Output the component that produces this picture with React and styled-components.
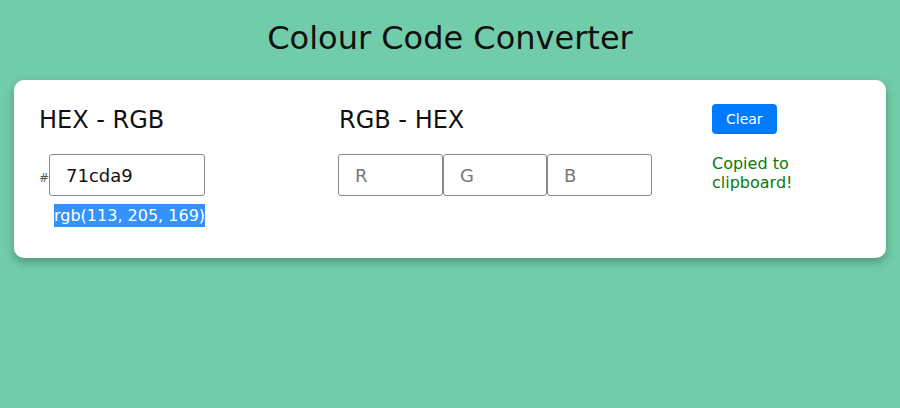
import React from "react";
import styled, { createGlobalStyle } from "styled-components";

const Global = createGlobalStyle`
  html, body { margin: 0; padding: 0; }
  body {
    background: #71cda9;
    font-family: "DejaVu Sans", "Liberation Sans", sans-serif;
    color: #111;
  }
  * { box-sizing: border-box; }
`;

const Page = styled.div`
  width: 900px;
  height: 408px;
  padding: 19px 14px 0;
`;

const Title = styled.h1`
  margin: 0 0 23px;
  font-size: 32px;
  line-height: 38px;
  font-weight: 400;
  text-align: center;
  color: #111;
`;

const Card = styled.div`
  background: #fff;
  border-radius: 10px;
  box-shadow: 0 4px 10px rgba(0, 0, 0, 0.28);
  padding: 24px 25px 31px;
  display: grid;
  grid-template-columns: 300px 373px 1fr;
  align-items: start;
`;

const Column = styled.div`
  display: flex;
  flex-direction: column;
  align-items: flex-start;
  gap: 20px;
`;

const Heading = styled.h2`
  margin: 2px 0 0;
  font-size: 24px;
  line-height: 28px;
  font-weight: 400;
  color: #111;
`;

const Field = styled.div`
  display: flex;
  flex-direction: column;
  align-items: flex-start;
  gap: 8px;
`;

const HexRow = styled.div`
  display: flex;
  align-items: baseline;
`;

const Hash = styled.span`
  font-size: 12px;
  color: #555;
`;

const Input = styled.input`
  width: ${(p) => p.$w}px;
  height: 42px;
  border: 1px solid #8a8a8a;
  border-radius: 3px;
  padding: 0 0 0 16px;
  font-family: "DejaVu Sans", "Liberation Sans", sans-serif;
  font-size: 18px;
  color: #111;
  background: #fff;
  outline: none;
  &::placeholder { color: #777; }
`;

const Result = styled.span`
  margin-left: 15px;
  display: inline-block;
  height: 23px;
  line-height: 23px;
  font-size: 16px;
  color: #fff;
  background: #3392fc;
`;

const RgbRow = styled.div`
  display: flex;
  margin-left: -1px;
`;

const ClearButton = styled.button`
  height: 30px;
  padding: 0 14px;
  border: none;
  border-radius: 4px;
  background: #007bff;
  color: #fff;
  font-family: "DejaVu Sans", "Liberation Sans", sans-serif;
  font-size: 14px;
  cursor: pointer;
`;

const Copied = styled.div`
  max-width: 120px;
  font-size: 16px;
  line-height: 19px;
  color: #0a7a0a;
`;

export default function App() {
  return (
    <>
      <Global />
      <Page>
        <Title>Colour Code Converter</Title>
        <Card>
          <Column>
            <Heading>HEX - RGB</Heading>
            <Field>
              <HexRow>
                <Hash>#</Hash>
                <Input $w={156} defaultValue="71cda9" />
              </HexRow>
              <Result>rgb(113, 205, 169)</Result>
            </Field>
          </Column>
          <Column>
            <Heading>RGB - HEX</Heading>
            <RgbRow>
              <Input $w={105} placeholder="R" />
              <Input $w={104} placeholder="G" />
              <Input $w={105} placeholder="B" />
            </RgbRow>
          </Column>
          <Column>
            <ClearButton>Clear</ClearButton>
            <Copied>Copied to clipboard!</Copied>
          </Column>
        </Card>
      </Page>
    </>
  );
}
